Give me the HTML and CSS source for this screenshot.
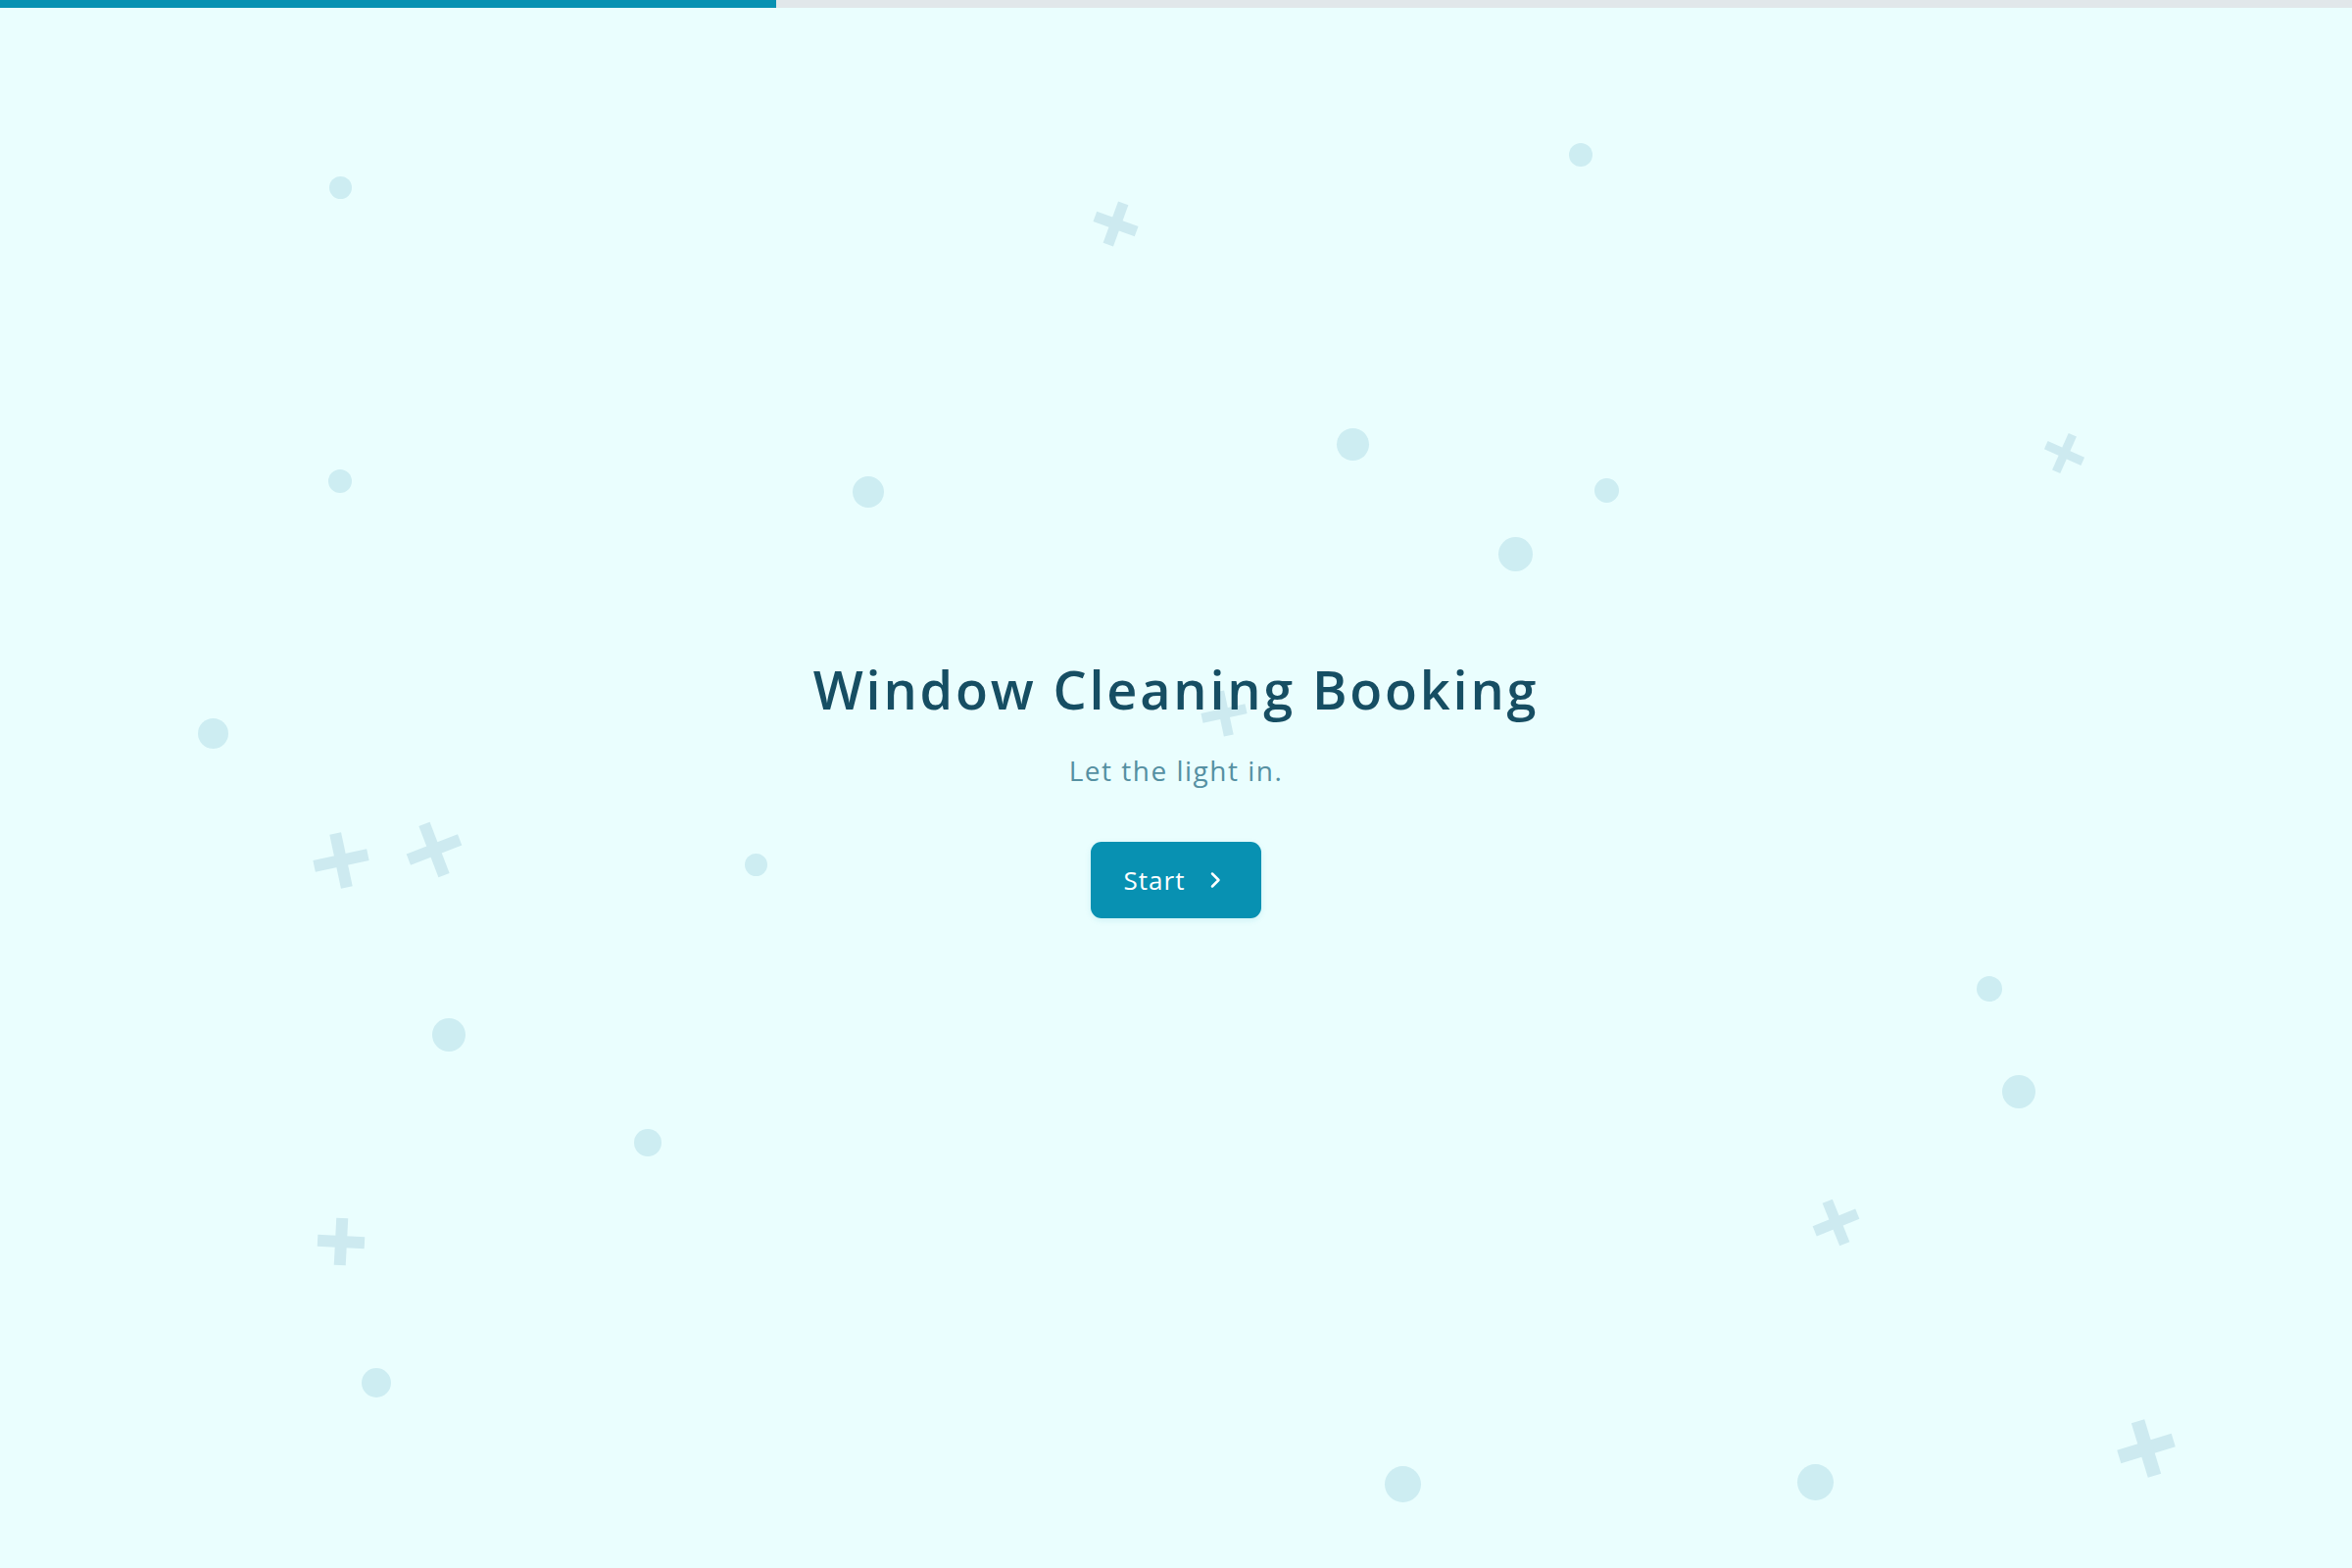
FILE: index.html
```html
<!DOCTYPE html>
<html lang="en">
<head>
<meta charset="utf-8">
<title>Window Cleaning Booking</title>
<link rel="stylesheet" href="styles.css">
</head>
<body>
<div class="progress"><div class="progress-fill" style="width:33%"></div></div>
<main class="stage">
  <div class="decor" aria-hidden="true">
    <span class="dot" style="--x:347px;--y:191px;--d:23px"></span>
    <span class="dot" style="--x:1613px;--y:158px;--d:24px"></span>
    <span class="dot" style="--x:347px;--y:491px;--d:24px"></span>
    <span class="dot" style="--x:886px;--y:502px;--d:32px"></span>
    <span class="dot" style="--x:1380px;--y:453px;--d:33px"></span>
    <span class="dot" style="--x:1639px;--y:500px;--d:25px"></span>
    <span class="dot" style="--x:1546px;--y:565px;--d:35px"></span>
    <span class="dot" style="--x:217px;--y:748px;--d:31px"></span>
    <span class="dot" style="--x:771px;--y:882px;--d:23px"></span>
    <span class="dot" style="--x:458px;--y:1056px;--d:34px"></span>
    <span class="dot" style="--x:661px;--y:1166px;--d:28px"></span>
    <span class="dot" style="--x:384px;--y:1411px;--d:30px"></span>
    <span class="dot" style="--x:1431px;--y:1514px;--d:37px"></span>
    <span class="dot" style="--x:1852px;--y:1512px;--d:37px"></span>
    <span class="dot" style="--x:2030px;--y:1009px;--d:26px"></span>
    <span class="dot" style="--x:2060px;--y:1114px;--d:34px"></span>

    <span class="plus" style="--x:1138px;--y:228px;--d:45px;--r:20deg"></span>
    <span class="plus" style="--x:2106px;--y:462px;--d:41px;--r:24deg"></span>
    <span class="plus" style="--x:1249px;--y:728px;--d:46px;--r:-12deg"></span>
    <span class="plus" style="--x:348px;--y:878px;--d:56px;--r:-12deg"></span>
    <span class="plus" style="--x:443px;--y:867px;--d:56px;--r:-21deg"></span>
    <span class="plus" style="--x:348px;--y:1267px;--d:48px;--r:3deg"></span>
    <span class="plus" style="--x:1873px;--y:1247px;--d:47px;--r:-22deg"></span>
    <span class="plus" style="--x:2190px;--y:1478px;--d:58px;--r:-17deg"></span>
  </div>

  <section class="hero">
    <h1 class="title">Window Cleaning Booking</h1>
    <p class="subtitle">Let the light in.</p>
    <button class="start" type="button">
      <span>Start</span>
      <svg class="chev" viewBox="0 0 12 18" width="12" height="18" aria-hidden="true"><path d="M3 2.5 L9.5 9 L3 15.5" fill="none" stroke="currentColor" stroke-width="2.5" stroke-linecap="round" stroke-linejoin="round"/></svg>
    </button>
  </section>
</main>
</body>
</html>
```

FILE: styles.css
```css
* { box-sizing: border-box; }

html, body {
  margin: 0;
  padding: 0;
  height: 100%;
}

body {
  background: #eafefe;
  font-family: "Open Sans", "Noto Sans", "DejaVu Sans", sans-serif;
  overflow: hidden;
}

.progress {
  position: fixed;
  top: 0;
  left: 0;
  right: 0;
  height: 8px;
  background: #e1e7ea;
  z-index: 5;
}

.progress-fill {
  height: 100%;
  background: #0891b2;
}

.stage {
  position: relative;
  height: 100vh;
  display: flex;
  align-items: center;
  justify-content: center;
}

.decor {
  position: absolute;
  inset: 0;
  pointer-events: none;
}

.dot {
  position: absolute;
  left: calc(var(--x) - var(--d) / 2);
  top: calc(var(--y) - var(--d) / 2);
  width: var(--d);
  height: var(--d);
  border-radius: 50%;
  background: #cdedf2;
}

.plus {
  position: absolute;
  left: calc(var(--x) - var(--d) / 2);
  top: calc(var(--y) - var(--d) / 2);
  width: var(--d);
  height: var(--d);
  transform: rotate(var(--r));
}

.plus::before,
.plus::after {
  content: "";
  position: absolute;
  background: #cdeaf0;
}

.plus::before {
  left: 0;
  right: 0;
  top: calc(50% - var(--d) * 0.115);
  height: calc(var(--d) * 0.23);
}

.plus::after {
  top: 0;
  bottom: 0;
  left: calc(50% - var(--d) * 0.115);
  width: calc(var(--d) * 0.23);
}

.hero {
  position: relative;
  z-index: 2;
  display: flex;
  flex-direction: column;
  align-items: center;
  margin-top: 8px;
}

.title {
  margin: 0;
  font-size: 54px;
  font-weight: 600;
  letter-spacing: 2.8px;
  line-height: 1.2;
  color: #164e63;
}

.subtitle {
  margin: 32px 0 0;
  font-size: 28px;
  font-weight: 400;
  letter-spacing: 1.5px;
  line-height: 1.3;
  color: #5590a2;
}

.start {
  margin-top: 55px;
  height: 78px;
  padding: 0 41px 0 34px;
  display: inline-flex;
  align-items: center;
  gap: 25px;
  border: 0;
  border-radius: 11px;
  background: #0891b2;
  color: #ffffff;
  font-family: inherit;
  font-size: 26px;
  font-weight: 500;
  letter-spacing: 1px;
  box-shadow: 0 2px 6px rgba(8, 145, 178, 0.12);
  cursor: pointer;
}

.chev {
  display: block;
}
```
